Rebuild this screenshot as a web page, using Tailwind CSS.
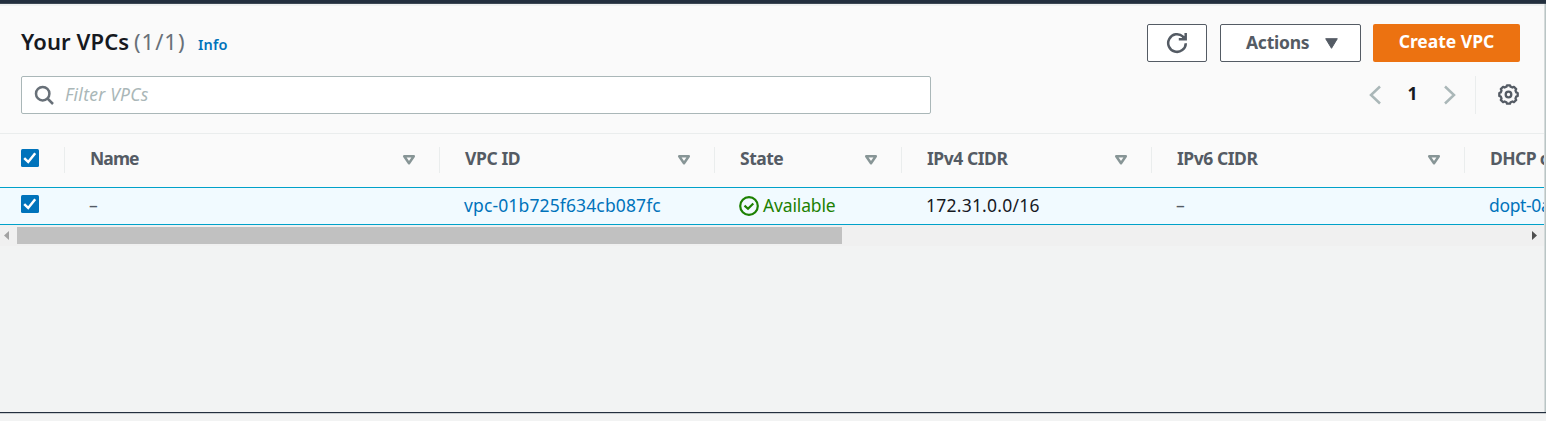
<!DOCTYPE html>
<html lang="en">
<head>
<meta charset="utf-8">
<title>Your VPCs</title>
<script src="https://cdn.jsdelivr.net/npm/@tailwindcss/browser@4"></script>
</head>
<body class="h-[421px] w-[1546px] overflow-hidden bg-[#f2f3f3] font-['Noto_Sans','Open_Sans',sans-serif] text-[17.5px] leading-6 text-[#16191f]">
<svg class="hidden">
  <symbol id="check" viewBox="0 0 18 18"><rect width="18" height="18" rx="1.5" fill="#0073bb"/><path d="M3.2 9.2 7.2 13 14.2 4.2" fill="none" stroke="#fff" stroke-width="2.5"/></symbol>
  <symbol id="sort" viewBox="0 0 14 12"><path d="M2.2 2.2H11.8L7 9.2Z" fill="none" stroke="#879596" stroke-width="2.5" stroke-linejoin="round"/></symbol>
</svg>
<div class="flex h-[421px] flex-col">
  <div class="h-1 shrink-0 border-b border-[#3d4854] bg-[#232f3e]"></div>
  <div class="flex min-h-0 flex-1">
    <main class="flex w-[1545px] flex-col overflow-hidden">
      <section class="h-[130px] shrink-0 border-t-2 border-b border-t-[#eff1f1] border-b-[#eaeded] bg-[#fafafa] pr-[25px] pl-[21px]">
        <div class="flex h-[70px] items-start pt-[18px]">
          <h1 class="flex h-[34px] flex-1 items-center whitespace-nowrap"><span class="w-[113px] text-[22px] font-semibold tracking-[0.1px]">Your VPCs</span><span class="w-[64px] text-[22px] tracking-[1px] text-[#687078]">(1/1)</span><a class="mt-[6px] text-[14.5px] font-semibold tracking-[0.2px] text-[#0073bb]">Info</a></h1>
          <div class="flex gap-3">
            <button class="flex h-[38px] w-[60px] items-center justify-center rounded-xs border border-[#545b64] bg-white"><svg class="size-[22px]" viewBox="0 0 22 22" fill="none" stroke="#545b64" stroke-width="2.5"><path d="M19.8 11.2A8.8 8.8 0 1 1 17 4.6L19.3 7.2M12.8 7.2H19.7V1"/><path d="M16 5.2 19.5 4V7H16Z" fill="#545b64" stroke="none"/></svg></button>
            <button class="ml-px flex h-[38px] w-[141px] items-center rounded-xs border border-[#545b64] bg-white pb-[3px] pl-[25px] font-bold text-[#545b64]"><span class="w-[79px] text-left tracking-[-0.25px]">Actions</span><svg class="mt-[3px] h-[11px] w-[13px]" viewBox="0 0 13 11"><path d="M.7.7H12.3L6.5 10.3Z" fill="#545b64" stroke="#545b64" stroke-linejoin="round"/></svg></button>
            <button class="flex h-[38px] w-[147px] items-center justify-center rounded-xs bg-[#ec7211] pb-[4px] font-bold text-white">Create VPC</button>
          </div>
        </div>
        <div class="flex h-[38px] justify-between">
          <div class="flex w-[910px] items-center rounded-xs border border-[#aab7b8] bg-white pl-[12px] tracking-[0.25px] text-[#aab7b8] italic"><svg class="mr-[10px] size-[21px]" viewBox="0 0 21 21" fill="none" stroke="#687078" stroke-width="2.5"><circle cx="8.7" cy="8.7" r="6.7"/><path d="M13.5 13.5 19 19"/></svg><span class="-mt-[3px]">Filter VPCs</span></div>
          <div class="flex items-center">
            <svg class="h-5 w-3" viewBox="0 0 12 20" fill="none" stroke="#aab7b8" stroke-width="2.5"><path d="M11 1.5 2 10 11 18.5"/></svg>
            <span class="-mt-[4px] w-[63px] text-center font-bold">1</span>
            <svg class="h-5 w-3" viewBox="0 0 12 20" fill="none" stroke="#aab7b8" stroke-width="2.5"><path d="M1 1.5 10 10 1 18.5"/></svg>
            <div class="ml-[19px] h-[38px] w-px bg-[#eaeded]"></div>
            <svg class="-mt-px mr-px ml-[22px] size-[21px]" viewBox="0 0 21 21" fill="none" stroke="#545b64" stroke-width="2.3" stroke-linejoin="round"><path d="M8.4 2.8 9 1.3H12L12.6 2.8 14.4 3.5 15.9 2.8 18.2 5.1 17.5 6.6 18.2 8.4 19.7 9V12L18.2 12.6 17.5 14.4 18.2 15.9 15.9 18.2 14.4 17.5 12.6 18.2 12 19.7H9L8.4 18.2 6.6 17.5 5.1 18.2 2.8 15.9 3.5 14.4 2.8 12.6 1.3 12V9L2.8 8.4 3.5 6.6 2.8 5.1 5.1 2.8 6.6 3.5Z"/><circle cx="10.5" cy="10.5" r="2.8"/></svg>
          </div>
        </div>
      </section>
      <div class="grid h-[53px] w-[1760px] shrink-0 grid-cols-[65px_375px_275px_187px_250px_313px_295px] items-center bg-[#fafafa] pb-[2px] font-bold whitespace-nowrap text-[#545b64]">
        <div class="flex h-[26px] items-start border-r border-[#eaeded] pt-[2px] pl-[21px]"><svg class="size-[18px]"><use href="#check"/></svg></div>
        <div class="flex h-[26px] items-center justify-between border-r border-[#eaeded] pr-[23px] pl-[25px]"><span class="-mt-[3px] tracking-[-0.9px]">Name</span><svg class="mt-[1px] h-3 w-[14px]"><use href="#sort"/></svg></div>
        <div class="flex h-[26px] items-center justify-between border-r border-[#eaeded] pr-[23px] pl-[25px]"><span class="-mt-[3px] tracking-[-0.4px]">VPC ID</span><svg class="mt-[1px] h-3 w-[14px]"><use href="#sort"/></svg></div>
        <div class="flex h-[26px] items-center justify-between border-r border-[#eaeded] pr-[23px] pl-[25px]"><span class="-mt-[3px] tracking-[-0.5px]">State</span><svg class="mt-[1px] h-3 w-[14px]"><use href="#sort"/></svg></div>
        <div class="flex h-[26px] items-center justify-between border-r border-[#eaeded] pr-[23px] pl-[25px]"><span class="-mt-[3px] tracking-[-0.45px]">IPv4 CIDR</span><svg class="mt-[1px] h-3 w-[14px]"><use href="#sort"/></svg></div>
        <div class="flex h-[26px] items-center justify-between border-r border-[#eaeded] pr-[23px] pl-[25px]"><span class="-mt-[3px] tracking-[-0.45px]">IPv6 CIDR</span><svg class="mt-[1px] h-3 w-[14px]"><use href="#sort"/></svg></div>
        <div class="flex h-[26px] items-center pl-[25px]"><span class="-mt-[3px] tracking-[-0.6px]">DHCP option set</span></div>
      </div>
      <div class="grid h-[38px] w-[1760px] shrink-0 grid-cols-[65px_375px_275px_187px_250px_313px_295px] items-center border-y border-[#00a1c9] bg-[#f1faff] whitespace-nowrap">
        <div class="pb-[4px] pl-[21px]"><svg class="h-[18px] w-[18px]"><use href="#check"/></svg></div>
        <div class="-mt-[2px] pl-[24px] text-[#545b64]">–</div>
        <a class="-mt-[2px] pl-[24px] tracking-[0.13px] text-[#0073bb]">vpc-01b725f634cb087fc</a>
        <div class="flex items-center gap-1 pl-6 text-[#1d8102]"><svg class="size-5" viewBox="0 0 20 20" fill="none" stroke="#1d8102" stroke-width="2.2"><circle cx="10" cy="10" r="8.8"/><path d="M5.5 9.6 9 12.7 14.3 7.5"/></svg><span class="-mt-[2px] tracking-[-0.15px]">Available</span></div>
        <div class="-mt-[2px] pl-[24px] tracking-[0.23px]">172.31.0.0/16</div>
        <div class="-mt-[2px] pl-[24px] text-[#545b64]">–</div>
        <a class="-mt-[2px] pl-[24px] tracking-[-0.35px] text-[#0073bb]">dopt-0a</a>
      </div>
      <div class="flex h-[21px] shrink-0 items-center justify-between bg-[#f0f0f0] pr-2 pl-1">
        <div class="flex items-center gap-2"><svg class="h-[9px] w-[5px]" viewBox="0 0 5 9"><path d="M5 0V9L0 4.5Z" fill="#a3a3a3"/></svg><div class="h-[17px] w-[825px] bg-[#c1c1c1]"></div></div>
        <svg class="h-[9px] w-[5px]" viewBox="0 0 5 9"><path d="M0 0V9L5 4.5Z" fill="#505050"/></svg>
      </div>
      <div class="flex-1"></div>
    </main>
    <div class="-ml-px w-[2px] border-l border-[#d5dbdb] bg-[#bac5c5]"></div>
  </div>
  <div class="h-[9px] shrink-0 border-t border-[#232f3e]"><div class="h-px bg-[#c9cdcf]"></div></div>
</div>
</body>
</html>
